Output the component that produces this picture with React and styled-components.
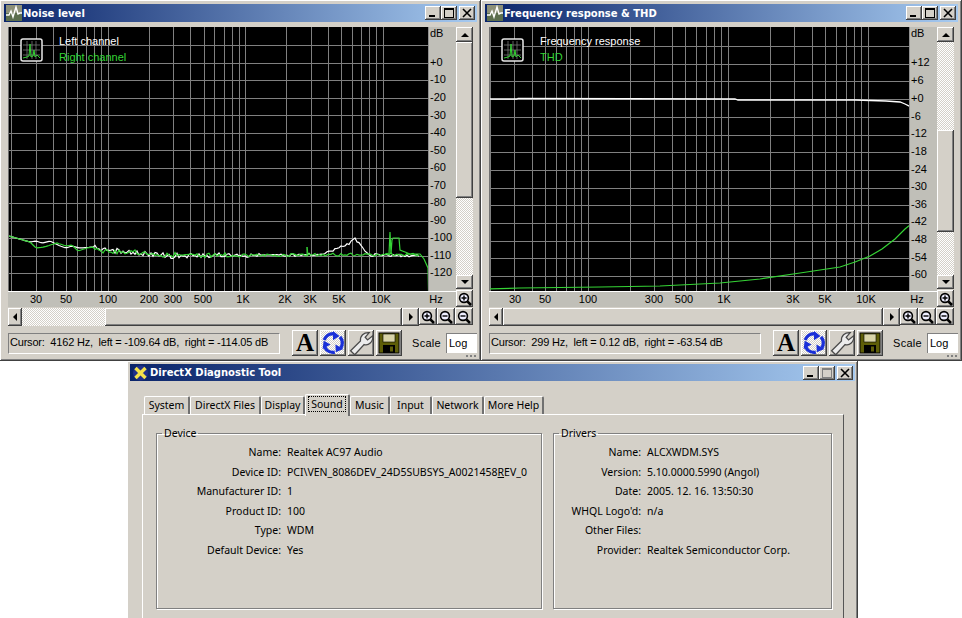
import React from 'react';
import styled, { createGlobalStyle, css } from 'styled-components';

const FACE = '#d4d0c8';
const GREEN = '#35d435';

const GlobalStyle = createGlobalStyle`
  html, body {
    margin: 0;
    padding: 0;
    background: #fff;
  }
  * {
    box-sizing: border-box;
  }
`;

const raised = css`
  background-color: ${FACE};
  box-shadow: inset -1px -1px 0 #404040, inset 1px 1px 0 #fff, inset -2px -2px 0 #808080;
`;

const hatch = css`
  background: repeating-conic-gradient(#fff 0 25%, ${FACE} 0 50%) 0 0 / 2px 2px;
`;

const Page = styled.div`
  width: 962px;
  height: 618px;
  overflow: hidden;
  background: #fff;
  font-family: 'Liberation Sans', Arial, sans-serif;
  font-size: 11px;
  color: #000;
`;

const TopRow = styled.div`
  display: flex;
`;

const Frame = styled.div`
  position: relative;
  width: ${(p) => p.$width}px;
  height: ${(p) => p.$height}px;
  padding: ${(p) => p.$border}px;
  ${raised}
`;

const TitleBar = styled.div`
  display: flex;
  align-items: center;
  height: ${(p) => p.$height}px;
  padding: 0 2px;
  gap: 1px;
  background: linear-gradient(90deg, #0a246a, #a6caf0);
`;

const TitleText = styled.span`
  flex: 1;
  color: #fff;
  font-family: 'DejaVu Sans', sans-serif;
  font-weight: bold;
  font-size: 10px;
  white-space: nowrap;
`;

const CaptionButtons = styled.div`
  display: flex;
`;

const CaptionButton = styled.div`
  display: flex;
  align-items: center;
  justify-content: center;
  width: 16px;
  height: 14px;
  margin-left: ${(p) => (p.$gap ? 2 : 0)}px;
  ${raised}
`;

const Client = styled.div`
  padding: 5px 0 0 4px;
`;

const ChartGrid = styled.div`
  display: grid;
  grid-template-columns: 448px 17px;
  height: 280px;
`;

const PlotColumn = styled.div`
  display: flex;
  flex-direction: column;
  background: #c0bfb8;
`;

const PlotRow = styled.div`
  display: flex;
  height: 264px;
`;

const Plot = styled.div`
  position: relative;
  width: 421px;
  background: #000;
  border-left: 1px solid #707070;
  border-right: 1px solid #909090;
  overflow: hidden;
`;

const PlotSvg = styled.svg`
  display: block;
  position: absolute;
  left: -1px;
  top: 0;
`;

const LegendList = styled.div`
  position: absolute;
  left: 50px;
  top: 7px;
  display: flex;
  flex-direction: column;
  gap: 2px;
`;

const LegendItem = styled.span`
  color: ${(p) => p.$color};
  font-size: 11px;
  line-height: 14px;
`;

const LegendIcon = styled.svg`
  position: absolute;
  left: 11px;
  top: 11px;
`;

const YAxis = styled.div`
  position: relative;
  flex: 1;
`;

const YTick = styled.span`
  position: absolute;
  left: 1px;
  line-height: 14px;
  transform: translateY(-50%);
`;

const XAxis = styled.div`
  position: relative;
  flex: 1;
  border-top: 1px solid #fff;
`;

const XTick = styled.span`
  position: absolute;
  top: 0;
  line-height: 14px;
  transform: translateX(-50%);
`;

const VScroll = styled.div`
  display: flex;
  flex-direction: column;
`;

const ArrowButton = styled.div`
  display: flex;
  align-items: center;
  justify-content: center;
  flex: none;
  width: ${(p) => p.$w}px;
  height: ${(p) => p.$h}px;
  ${raised}
  &::before {
    content: '';
    border-style: solid;
    border-color: transparent;
    ${(p) => p.$dir === 'up' && 'border-width: 0 4px 4px; border-bottom-color: #000;'}
    ${(p) => p.$dir === 'down' && 'border-width: 4px 4px 0; border-top-color: #000;'}
    ${(p) => p.$dir === 'left' && 'border-width: 4px 4px 4px 0; border-right-color: #000;'}
    ${(p) => p.$dir === 'right' && 'border-width: 4px 0 4px 4px; border-left-color: #000;'}
  }
`;

const VTrack = styled.div`
  flex: 1;
  ${hatch}
`;

const VThumb = styled.div`
  margin-top: ${(p) => p.$offset}px;
  height: ${(p) => p.$size}px;
  ${raised}
`;

const IconButton = styled.div`
  display: flex;
  align-items: center;
  justify-content: center;
  flex: none;
  width: ${(p) => p.$w}px;
  height: 17px;
  margin-top: ${(p) => p.$top || 0}px;
  ${raised}
`;

const HRow = styled.div`
  display: flex;
  margin-top: 1px;
  height: 18px;
  width: 465px;
`;

const HScroll = styled.div`
  display: flex;
  flex: 1;
`;

const HHatch = styled.div`
  width: ${(p) => p.$size}px;
  ${hatch}
`;

const HThumb = styled.div`
  flex: 1;
  ${raised}
`;

const StatusRow = styled.div`
  display: flex;
  align-items: center;
  margin-top: 4px;
  height: 26px;
`;

const StatusField = styled.div`
  width: 272px;
  height: 21px;
  margin-right: 12px;
  padding-left: 1px;
  line-height: 17px;
  letter-spacing: -0.2px;
  white-space: pre;
  border: 1px solid;
  border-color: #808080 #fff #fff #808080;
`;

const ToolButtons = styled.div`
  display: flex;
  gap: 2px;
`;

const ToolButton = styled.div`
  display: flex;
  align-items: center;
  justify-content: center;
  width: 26px;
  height: 26px;
  ${raised}
  ${(p) => p.$active && 'background: repeating-conic-gradient(#fff 0 25%, #d4d0c8 0 50%) 0 0 / 2px 2px;'}
`;

const LetterIcon = styled.span`
  font-family: 'Liberation Serif', serif;
  font-weight: bold;
  font-size: 25px;
  line-height: 26px;
`;

const ScaleLabel = styled.span`
  margin-left: 10px;
  width: 34px;
  letter-spacing: 0.3px;
`;

const ScaleBox = styled.div`
  width: 31px;
  height: 20px;
  padding-left: 2px;
  line-height: 18px;
  background: #fff;
  border-top: 1px solid #808080;
  border-left: 1px solid #808080;
`;

const Grip = styled.div`
  position: absolute;
  right: 4px;
  bottom: 4px;
  width: 11px;
  height: 2px;
  background: repeating-linear-gradient(90deg, #808080 0 2px, transparent 2px 4px);
`;

const DialogRow = styled.div`
  padding-left: 127px;
`;

const DialogBody = styled.div`
  padding: 13px 11px 0 12px;
`;

const TabStrip = styled.div`
  display: flex;
  align-items: flex-end;
  height: 20px;
  padding-left: 2px;
  position: relative;
  z-index: 1;
`;

const Tab = styled.div`
  display: flex;
  align-items: center;
  justify-content: center;
  width: ${(p) => p.$w}px;
  height: ${(p) => (p.$active ? 22 : 18)}px;
  margin-bottom: ${(p) => (p.$active ? -2 : 0)}px;
  padding-bottom: ${(p) => (p.$active ? 3 : 1)}px;
  font-family: 'Noto Sans', sans-serif;
  font-size: 10.5px;
  background: ${FACE};
  border-radius: 2px 2px 0 0;
  border-top: 1px solid #fff;
  border-left: 1px solid #fff;
  border-right: 2px solid #707070;
`;

const FocusLabel = styled.span`
  padding: 0 2px;
  line-height: 14px;
  border: 1px dotted #000;
`;

const TabPanel = styled.div`
  display: flex;
  gap: 11px;
  height: 240px;
  padding: 12px 13px;
  border-top: 1px solid #fff;
  border-left: 1px solid #fff;
  border-right: 1px solid #555;
`;

const Group = styled.fieldset`
  flex: none;
  width: ${(p) => p.$w}px;
  height: 182px;
  margin: 0;
  padding: 3px 0 0;
  border: 1px solid #808080;
  box-shadow: 1px 1px 0 #fff, inset 1px 1px 0 #fff;
  font-family: 'Noto Sans', sans-serif;
  font-size: 10.5px;
`;

const GroupTitle = styled.legend`
  margin-left: 5px;
  padding: 0 2px;
  line-height: 13px;
`;

const InfoRow = styled.div`
  display: grid;
  grid-template-columns: ${(p) => p.$label}px 1fr;
  column-gap: 6px;
  height: 19.6px;
  line-height: 19.6px;
  white-space: nowrap;
`;

const InfoLabel = styled.span`
  text-align: right;
`;

function scaleX(origin, decade, f) {
  return origin + decade * Math.log10(f / 100);
}

function rnd(i) {
  const v = Math.sin(i * 12.9898) * 43758.5453;
  return v - Math.floor(v);
}

function lerp(anchors, x) {
  for (let i = 1; i < anchors.length; i++) {
    if (x <= anchors[i][0]) {
      const [x0, y0] = anchors[i - 1];
      const [x1, y1] = anchors[i];
      return y0 + ((y1 - y0) * (x - x0)) / (x1 - x0);
    }
  }
  return anchors[anchors.length - 1][1];
}

// noise trace: clean below 100Hz-ish, jittery above
function noisy(anchors, seed, amp) {
  const pts = [];
  const last = anchors[anchors.length - 1][0];
  for (let x = anchors[0][0]; x <= last; x += 2) {
    const k = x < 95 ? 0 : x < 250 ? 1 : 0.6;
    const y = lerp(anchors, x) + (rnd(x + seed) - 0.5) * amp * k;
    pts.push(`${x},${y.toFixed(1)}`);
  }
  return pts.join(' ');
}

const LEFT_NOISE = [
  [9, 236], [30, 242], [36, 241], [42, 243], [50, 241], [54, 243], [60, 246], [66, 248], [72, 246],
  [80, 248], [94, 247], [100, 250], [120, 251], [135, 253], [150, 254], [170, 256], [200, 255], [300, 255],
  [320, 254], [328, 252], [338, 248], [350, 243], [355, 238], [357, 241], [362, 245], [368, 255], [420, 256],
];
const RIGHT_NOISE = [
  [9, 236], [30, 242], [36, 248], [44, 247], [57, 243], [66, 246], [72, 245], [78, 251], [87, 248],
  [94, 247], [100, 250], [110, 252], [120, 251], [135, 252], [150, 254], [170, 255], [300, 255], [420, 254],
];

const FREQ_LINE = '489,99 517,99 518,98.5 735,99 738,100 855,100 886,101 900,102 905,104 911,107';
const THD_LINE =
  '489,289 520,288 600,287 660,286 720,283 760,279 800,273 840,267 855,262 870,256 882,249 895,239 905,229 911,224';

const GRID_FREQS = [20, 30, 40, 50, 60, 70, 80, 90, 100, 200, 300, 400, 500, 600, 700, 800, 900, 1000, 2000, 3000, 4000, 5000, 6000, 7000, 8000, 9000, 10000];

const noiseWindow = {
  title: 'Noise level',
  viewX: 8,
  origin: 107.5,
  decade: 137.5,
  gridTop: 45,
  gridStep: 17.55,
  gridCount: 14,
  legend: ['Left channel', 'Right channel'],
  yTicks: [
    ['dB', 33], ['+0', 62], ['-10', 79], ['-20', 97], ['-30', 115], ['-40', 132], ['-50', 150], ['-60', 167],
    ['-70', 185], ['-80', 202], ['-90', 220], ['-100', 237], ['-110', 255], ['-120', 272],
  ],
  xTicks: [['30', 36], ['50', 66], ['100', 108], ['200', 149], ['300', 173], ['500', 203], ['1K', 243], ['2K', 285], ['3K', 310], ['5K', 339], ['10K', 381], ['Hz', 436]],
  thumb: { offset: 0, size: 156 },
  hatchWidth: 83,
  cursor: 'Cursor:  4162 Hz,  left = -109.64 dB,  right = -114.05 dB',
  traces: (
    <>
      <polyline points={noisy(LEFT_NOISE, 7, 5)} fill="none" stroke="#fff" strokeWidth="1.2" />
      <polyline points={noisy(RIGHT_NOISE, 91, 5)} fill="none" stroke={GREEN} strokeWidth="1.2" />
      <polyline points="307,255 307,247 308,255" fill="none" stroke={GREEN} strokeWidth="1" />
      <polyline
        points="385,254 389,254 390,232 391,254 392,240 393,238 399,238 400,250 405,252 410,254 420,254 424,259 428,268 428.5,291"
        fill="none"
        stroke={GREEN}
        strokeWidth="1.2"
      />
    </>
  ),
};

const freqWindow = {
  title: 'Frequency response & THD',
  viewX: 489,
  origin: 587.5,
  decade: 140,
  gridTop: 46,
  gridStep: 17.7,
  gridCount: 14,
  legend: ['Frequency response', 'THD'],
  yTicks: [
    ['dB', 33], ['+12', 62], ['+6', 80], ['+0', 98], ['-6', 116], ['-12', 133], ['-18', 151], ['-24', 169],
    ['-30', 186], ['-36', 204], ['-42', 221], ['-48', 239], ['-54', 257], ['-60', 274],
  ],
  xTicks: [['30', 515], ['50', 545], ['100', 588], ['300', 654], ['500', 684], ['1K', 724], ['3K', 793], ['5K', 825], ['10K', 866], ['Hz', 917]],
  thumb: { offset: 88, size: 102 },
  hatchWidth: 0,
  cursor: 'Cursor:  299 Hz,  left = 0.12 dB,  right = -63.54 dB',
  traces: (
    <>
      <polyline points={FREQ_LINE} fill="none" stroke="#fff" strokeWidth="1.3" />
      <polyline points={THD_LINE} fill="none" stroke={GREEN} strokeWidth="1.2" />
    </>
  ),
};

const deviceRows = [
  ['Name:', 'Realtek AC97 Audio'],
  ['Device ID:', <>PCI\VEN_8086DEV_24D5SUBSYS_A0021458<u>R</u>EV_0</>],
  ['Manufacturer ID:', '1'],
  ['Product ID:', '100'],
  ['Type:', 'WDM'],
  ['Default Device:', 'Yes'],
];

const driverRows = [
  ['Name:', 'ALCXWDM.SYS'],
  ['Version:', '5.10.0000.5990 (Angol)'],
  ['Date:', '2005. 12. 16. 13:50:30'],
  ["WHQL Logo'd:", 'n/a'],
  ['Other Files:', ''],
  ['Provider:', 'Realtek Semiconductor Corp.'],
];

const tabs = [
  ['System', 46], ['DirectX Files', 71], ['Display', 44], ['Sound', 45, true], ['Music', 40], ['Input', 42], ['Network', 52], ['More Help', 60],
];

function AppIcon() {
  return (
    <svg width="16" height="16" viewBox="0 0 16 16">
      <rect width="16" height="8" fill="#8d9078" />
      <rect y="8" width="16" height="8" fill="#5c6e4e" />
      <polyline points="0,10 3,10 5,6 7,12 10,2 12,9 14,8 16,8" fill="none" stroke="#fff" strokeWidth="1.4" />
    </svg>
  );
}

function DirectXIcon() {
  return (
    <svg width="17" height="16" viewBox="0 0 17 16">
      <circle cx="8.5" cy="8" r="7.5" fill="#20308a" />
      <path d="M3.5 3 L13.5 13 M13.5 3 L3.5 13" stroke="#f4e24a" strokeWidth="3.4" />
    </svg>
  );
}

function MinIcon() {
  return (
    <svg width="10" height="10" viewBox="0 0 10 10">
      <rect x="1" y="7" width="6" height="2" />
    </svg>
  );
}

function MaxIcon({ disabled }) {
  const color = disabled ? '#808080' : '#000';
  return (
    <svg width="10" height="10" viewBox="0 0 10 10">
      <rect x="0.5" y="0.5" width="9" height="9" fill="none" stroke={color} />
      <rect x="0" y="0" width="10" height="2" fill={color} />
    </svg>
  );
}

function CloseIcon() {
  return (
    <svg width="10" height="10" viewBox="0 0 10 10">
      <path d="M1 1 L9 9 M9 1 L1 9" stroke="#000" strokeWidth="1.6" />
    </svg>
  );
}

function Caption({ maxDisabled }) {
  return (
    <CaptionButtons>
      <CaptionButton><MinIcon /></CaptionButton>
      <CaptionButton><MaxIcon disabled={maxDisabled} /></CaptionButton>
      <CaptionButton $gap><CloseIcon /></CaptionButton>
    </CaptionButtons>
  );
}

function Magnifier({ plus }) {
  return (
    <svg width="14" height="14" viewBox="0 0 14 14">
      <circle cx="6" cy="6" r="4.4" fill="#eef" stroke="#000" strokeWidth="1.6" />
      <path d="M9.3 9.3 L13 13" stroke="#000" strokeWidth="2.6" />
      <path d={plus ? 'M3.5 6 H8.5 M6 3.5 V8.5' : 'M3.5 6 H8.5'} stroke="#000" strokeWidth="1.4" />
    </svg>
  );
}

function ChartGlyph() {
  return (
    <LegendIcon width="23" height="24" viewBox="0 0 23 24">
      <rect x="1" y="1" width="21" height="22" rx="2" fill="#000" stroke="#e8e8e8" strokeWidth="1.5" />
      <path d="M3 7 H20 M3 12 H20 M3 17 H20 M7 3 V21 M12 3 V21 M16 3 V21" stroke="#777" strokeWidth="0.8" />
      <polyline points="3,20 7,19 9,18 10,6 11,19 13,18 14,12 15,19 17,17 20,20" fill="none" stroke={GREEN} strokeWidth="1" />
    </LegendIcon>
  );
}

function RecycleIcon() {
  const arm = (
    <>
      <path d="M3.2 9 A9.2 9.2 0 0 1 12.5 2.8" fill="none" stroke="#1a30d8" strokeWidth="3.4" />
      <polygon points="18.5,5 12,9.2 12,0" fill="#1a30d8" />
    </>
  );
  return (
    <svg width="24" height="24" viewBox="0 0 24 24">
      {arm}
      <g transform="rotate(120 12 12)">{arm}</g>
      <g transform="rotate(240 12 12)">{arm}</g>
    </svg>
  );
}

function WrenchIcon() {
  return (
    <svg width="25" height="25" viewBox="0 0 24 24">
      <path
        d="M1.5 19 L11 9.5 C10.5 5 14 1 19.5 1.5 L15.5 6 L17.8 8.6 L22.8 4.5 C23.5 10.5 18.5 14.5 14.5 13 L5.5 22.8 Z"
        fill="#ececec"
        stroke="#4a4a4a"
        strokeWidth="1.2"
      />
    </svg>
  );
}

function FloppyIcon() {
  return (
    <svg width="22" height="22" viewBox="0 0 22 22">
      <rect x="1" y="1" width="20" height="20" fill="#5e5e08" stroke="#000" />
      <rect x="5" y="2" width="12" height="8" fill="#d8d4a8" stroke="#000" strokeWidth="0.6" />
      <rect x="5" y="13" width="12" height="8" fill="#000" />
      <rect x="12" y="14.5" width="3" height="5" fill="#5e5e08" />
    </svg>
  );
}

function AnalyzerWindow({ data }) {
  const vLines = GRID_FREQS.map((f) => scaleX(data.origin, data.decade, f));
  const hLines = Array.from({ length: data.gridCount }, (_, i) => data.gridTop + i * data.gridStep);
  return (
    <Frame $width={481} $height={361} $border={4}>
      <TitleBar $height={18}>
        <AppIcon />
        <TitleText>{data.title}</TitleText>
        <Caption />
      </TitleBar>
      <Client>
        <ChartGrid>
          <PlotColumn>
            <PlotRow>
              <Plot>
                <PlotSvg width="421" height="264" viewBox={`${data.viewX} 27 421 264`}>
                  <g stroke="#808080" shapeRendering="crispEdges">
                    {vLines.map((x) => (
                      <line key={x} x1={Math.round(x) + 0.5} x2={Math.round(x) + 0.5} y1="27" y2="291" />
                    ))}
                    {hLines.map((y) => (
                      <line key={y} x1={data.viewX} x2={data.viewX + 421} y1={Math.round(y) + 0.5} y2={Math.round(y) + 0.5} />
                    ))}
                  </g>
                  {data.traces}
                </PlotSvg>
                <ChartGlyph />
                <LegendList>
                  <LegendItem $color="#fff">{data.legend[0]}</LegendItem>
                  <LegendItem $color={GREEN}>{data.legend[1]}</LegendItem>
                </LegendList>
              </Plot>
              <YAxis>
                {data.yTicks.map(([label, y]) => (
                  <YTick key={label} style={{ top: y - 27 }}>{label}</YTick>
                ))}
              </YAxis>
            </PlotRow>
            <XAxis>
              {data.xTicks.map(([label, x]) => (
                <XTick key={label} style={{ left: x - data.viewX }}>{label}</XTick>
              ))}
            </XAxis>
          </PlotColumn>
          <VScroll>
            <ArrowButton $dir="up" $w={17} $h={15} />
            <VTrack>
              <VThumb $offset={data.thumb.offset} $size={data.thumb.size} />
            </VTrack>
            <ArrowButton $dir="down" $w={17} $h={14} />
            <IconButton $w={17} $top={1}><Magnifier plus /></IconButton>
          </VScroll>
        </ChartGrid>
        <HRow>
          <HScroll>
            <ArrowButton $dir="left" $w={14} $h={18} />
            {data.hatchWidth > 0 && <HHatch $size={data.hatchWidth} />}
            <HThumb />
            <ArrowButton $dir="right" $w={17} $h={18} />
          </HScroll>
          <IconButton $w={18}><Magnifier plus /></IconButton>
          <IconButton $w={18}><Magnifier /></IconButton>
          <IconButton $w={18}><Magnifier /></IconButton>
        </HRow>
        <StatusRow>
          <StatusField>{data.cursor}</StatusField>
          <ToolButtons>
            <ToolButton><LetterIcon>A</LetterIcon></ToolButton>
            <ToolButton $active><RecycleIcon /></ToolButton>
            <ToolButton><WrenchIcon /></ToolButton>
            <ToolButton><FloppyIcon /></ToolButton>
          </ToolButtons>
          <ScaleLabel>Scale</ScaleLabel>
          <ScaleBox>Log</ScaleBox>
        </StatusRow>
      </Client>
      <Grip />
    </Frame>
  );
}

function InfoGroup({ title, width, labelWidth, rows }) {
  return (
    <Group $w={width}>
      <GroupTitle>{title}</GroupTitle>
      {rows.map(([label, value]) => (
        <InfoRow key={label} $label={labelWidth}>
          <InfoLabel>{label}</InfoLabel>
          <span>{value}</span>
        </InfoRow>
      ))}
    </Group>
  );
}

export default function App() {
  return (
    <Page>
      <GlobalStyle />
      <TopRow>
        <AnalyzerWindow data={noiseWindow} />
        <AnalyzerWindow data={freqWindow} />
      </TopRow>
      <DialogRow>
        <Frame $width={731} $height={300} $border={3}>
          <TitleBar $height={17}>
            <DirectXIcon />
            <TitleText>DirectX Diagnostic Tool</TitleText>
            <Caption maxDisabled />
          </TitleBar>
          <DialogBody>
            <TabStrip>
              {tabs.map(([label, w, active]) => (
                <Tab key={label} $w={w} $active={active}>
                  {active ? <FocusLabel>{label}</FocusLabel> : label}
                </Tab>
              ))}
            </TabStrip>
            <TabPanel>
              <InfoGroup title="Device" width={386} labelWidth={124} rows={deviceRows} />
              <InfoGroup title="Drivers" width={279} labelWidth={87} rows={driverRows} />
            </TabPanel>
          </DialogBody>
        </Frame>
      </DialogRow>
    </Page>
  );
}
